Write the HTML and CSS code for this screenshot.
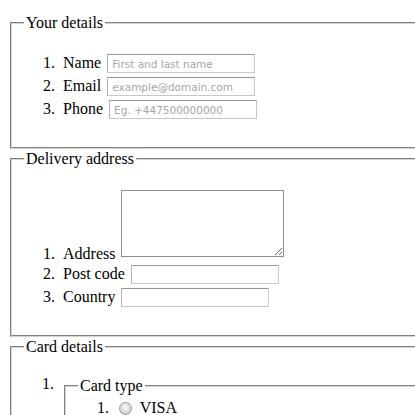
FILE: index.html
```html
<!DOCTYPE html>
<html lang="en">
<head>
<meta charset="utf-8">
<title>Order form</title>
<link rel="stylesheet" href="styles.css">
</head>
<body>
<form class="order-form">
  <fieldset class="section">
    <legend class="section-title">Your details</legend>
    <ol class="field-list">
      <li class="field"><label class="field-label" for="name">Name</label> <input class="text-input" id="name" type="text" placeholder="First and last name"></li>
      <li class="field"><label class="field-label" for="email">Email</label> <input class="text-input" id="email" type="email" placeholder="example@domain.com"></li>
      <li class="field"><label class="field-label" for="phone">Phone</label> <input class="text-input" id="phone" type="tel" placeholder="Eg. +447500000000"></li>
    </ol>
  </fieldset>
  <fieldset class="section">
    <legend class="section-title">Delivery address</legend>
    <ol class="field-list">
      <li class="field"><label class="field-label" for="address">Address</label> <textarea class="text-area" id="address"></textarea></li>
      <li class="field"><label class="field-label" for="postcode">Post code</label> <input class="text-input" id="postcode" type="text"></li>
      <li class="field"><label class="field-label" for="country">Country</label> <input class="text-input" id="country" type="text"></li>
    </ol>
  </fieldset>
  <fieldset class="section">
    <legend class="section-title">Card details</legend>
    <ol class="field-list">
      <li class="field field-group">
        <fieldset class="subsection">
          <legend class="section-title">Card type</legend>
          <ol class="option-list">
            <li class="field"><input class="radio" id="visa" type="radio" name="cardtype"> <label for="visa">VISA</label></li>
            <li class="field"><input class="radio" id="amex" type="radio" name="cardtype"> <label for="amex">AmEx</label></li>
            <li class="field"><input class="radio" id="mastercard" type="radio" name="cardtype"> <label for="mastercard">Mastercard</label></li>
          </ol>
        </fieldset>
      </li>
      <li class="field"><label class="field-label" for="cardnumber">Card number</label> <input class="text-input" id="cardnumber" type="text"></li>
      <li class="field"><label class="field-label" for="secure">Security code</label> <input class="text-input" id="secure" type="text"></li>
      <li class="field"><label class="field-label" for="namecard">Name on card</label> <input class="text-input" id="namecard" type="text" placeholder="Exact name as on the card"></li>
    </ol>
  </fieldset>
</form>
</body>
</html>
```

FILE: styles.css
```css
html {
  overflow: hidden;
  background: #fff;
}

body {
  margin: 0;
  padding: 13px 0 0 8px;
  width: 800px;
  font: 16px "Liberation Serif", "Times New Roman", serif;
  color: #000;
}

.order-form {
  margin: 0;
}

.section {
  margin: 0 2px;
  padding: 0 12px 11px;
  border: 2px groove #d4d4d4;
  min-width: 0;
}

.section-title {
  padding: 0 2px;
  line-height: 20px;
}

.field-list {
  margin: 19px 0 15px;
  padding: 0 0 0 39px;
}

.field {
  line-height: normal;
}

.field::marker {
  content: counter(list-item) ".\a0\a0";
}

.field-group {
  list-style: none;
}

.field-group::marker {
  content: none;
}

.field-group::before {
  content: counter(list-item) ".";
  float: left;
  width: 21px;
  margin-left: -21px;
  line-height: 16px;
}

.text-input {
  box-sizing: border-box;
  width: 148px;
  height: 19px;
  margin: 2px;
  padding: 1px 4px;
  border: 1px solid #c8c8c8;
  border-top-color: #969696;
  border-left-color: #b4b4b4;
  background: #fff;
  font: 10.5px "DejaVu Sans", sans-serif;
  color: #000;
  vertical-align: baseline;
}

.text-input::placeholder {
  color: #a6a6a6;
}

.text-area {
  box-sizing: border-box;
  width: 163px;
  height: 67px;
  margin: 2px;
  padding: 2px;
  border: 1px solid #8e8e8e;
  background: #fff;
  font: 10.5px "DejaVu Sans", sans-serif;
  vertical-align: baseline;
  resize: both;
}

.subsection {
  margin: 0 0 0 1px;
  padding: 3px 12px 10px;
  border: 2px groove #d4d4d4;
  min-width: 0;
}

.option-list {
  margin: 0;
  padding: 0 0 0 39px;
}

.radio {
  appearance: none;
  -webkit-appearance: none;
  box-sizing: border-box;
  width: 13px;
  height: 13px;
  margin: 0 4px 0 2px;
  border: 1px solid #9a9a9a;
  border-radius: 50%;
  background: radial-gradient(circle at 50% 40%, #f8f8f8 0, #e0e0e0 45%, #bdbdbd 100%);
  vertical-align: -2px;
}
```
